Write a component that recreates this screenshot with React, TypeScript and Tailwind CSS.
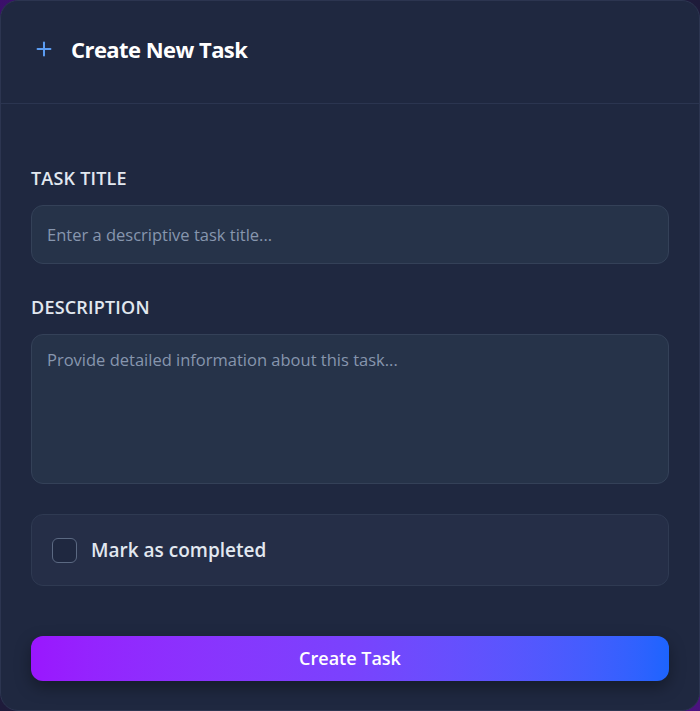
import { Plus } from 'lucide-react';

const App = () => {
  return (
    <div className="w-[700px] h-[711px] bg-gradient-to-br from-[#3b0f6b] via-[#1e1b3a] to-[#4b1280]" style={{ fontFamily: '"Open Sans", "Noto Sans", sans-serif' }}>
      <div className="h-full w-full rounded-[18px] border border-[#2c3550] bg-[#1f2840] flex flex-col overflow-hidden">
        <div className="flex items-center gap-[16px] px-[32px] pt-8 pb-[38px] border-b border-[#2b3550]">
          <Plus className="w-[22px] h-[22px] text-[#5b9cf2]" strokeWidth={2.2} />
          <h2 className="text-[22px] leading-8 font-bold text-white tracking-[-0.55px]">Create New Task</h2>
        </div>
        <div className="flex flex-col px-[30px] pt-[62px]">
          <label className="text-[18px] leading-6 font-semibold text-[#e2e8f0] uppercase tracking-[0.2px]">Task Title</label>
          <input
            type="text"
            placeholder="Enter a descriptive task title..."
            className="mt-[15px] h-[59px] rounded-xl border border-[#344158] bg-[#263349] px-[15px] text-[16.5px] text-[#e2e8f0] placeholder:text-[#8796ae] outline-none"
          />
          <label className="mt-[31px] text-[18px] leading-6 font-semibold text-[#e2e8f0] uppercase tracking-[0.2px]">Description</label>
          <textarea
            placeholder="Provide detailed information about this task..."
            className="mt-[15px] h-[150px] resize-none rounded-xl border border-[#344158] bg-[#263349] px-[15px] py-[13px] text-[16.5px] leading-6 text-[#e2e8f0] placeholder:text-[#8796ae] outline-none"
          />
          <div className="mt-[30px] h-[72px] rounded-xl border border-[#2f3a52] bg-[#252e47] flex items-center px-5 gap-[14px]">
            <span className="w-[25px] h-[25px] rounded-md border-[1.5px] border-[#5b6982] bg-[#1f2840]" />
            <span className="text-[19px] font-semibold text-[#e2e8f0]">Mark as completed</span>
          </div>
          <button className="mt-[50px] h-[45px] rounded-xl bg-gradient-to-r from-[#9a16fe] via-[#7a42fd] to-[#1c64fe] text-white text-[18px] font-semibold shadow-[0_6px_16px_rgba(0,0,0,0.35)]">
            Create Task
          </button>
        </div>
      </div>
    </div>
  );
};

export default App;
